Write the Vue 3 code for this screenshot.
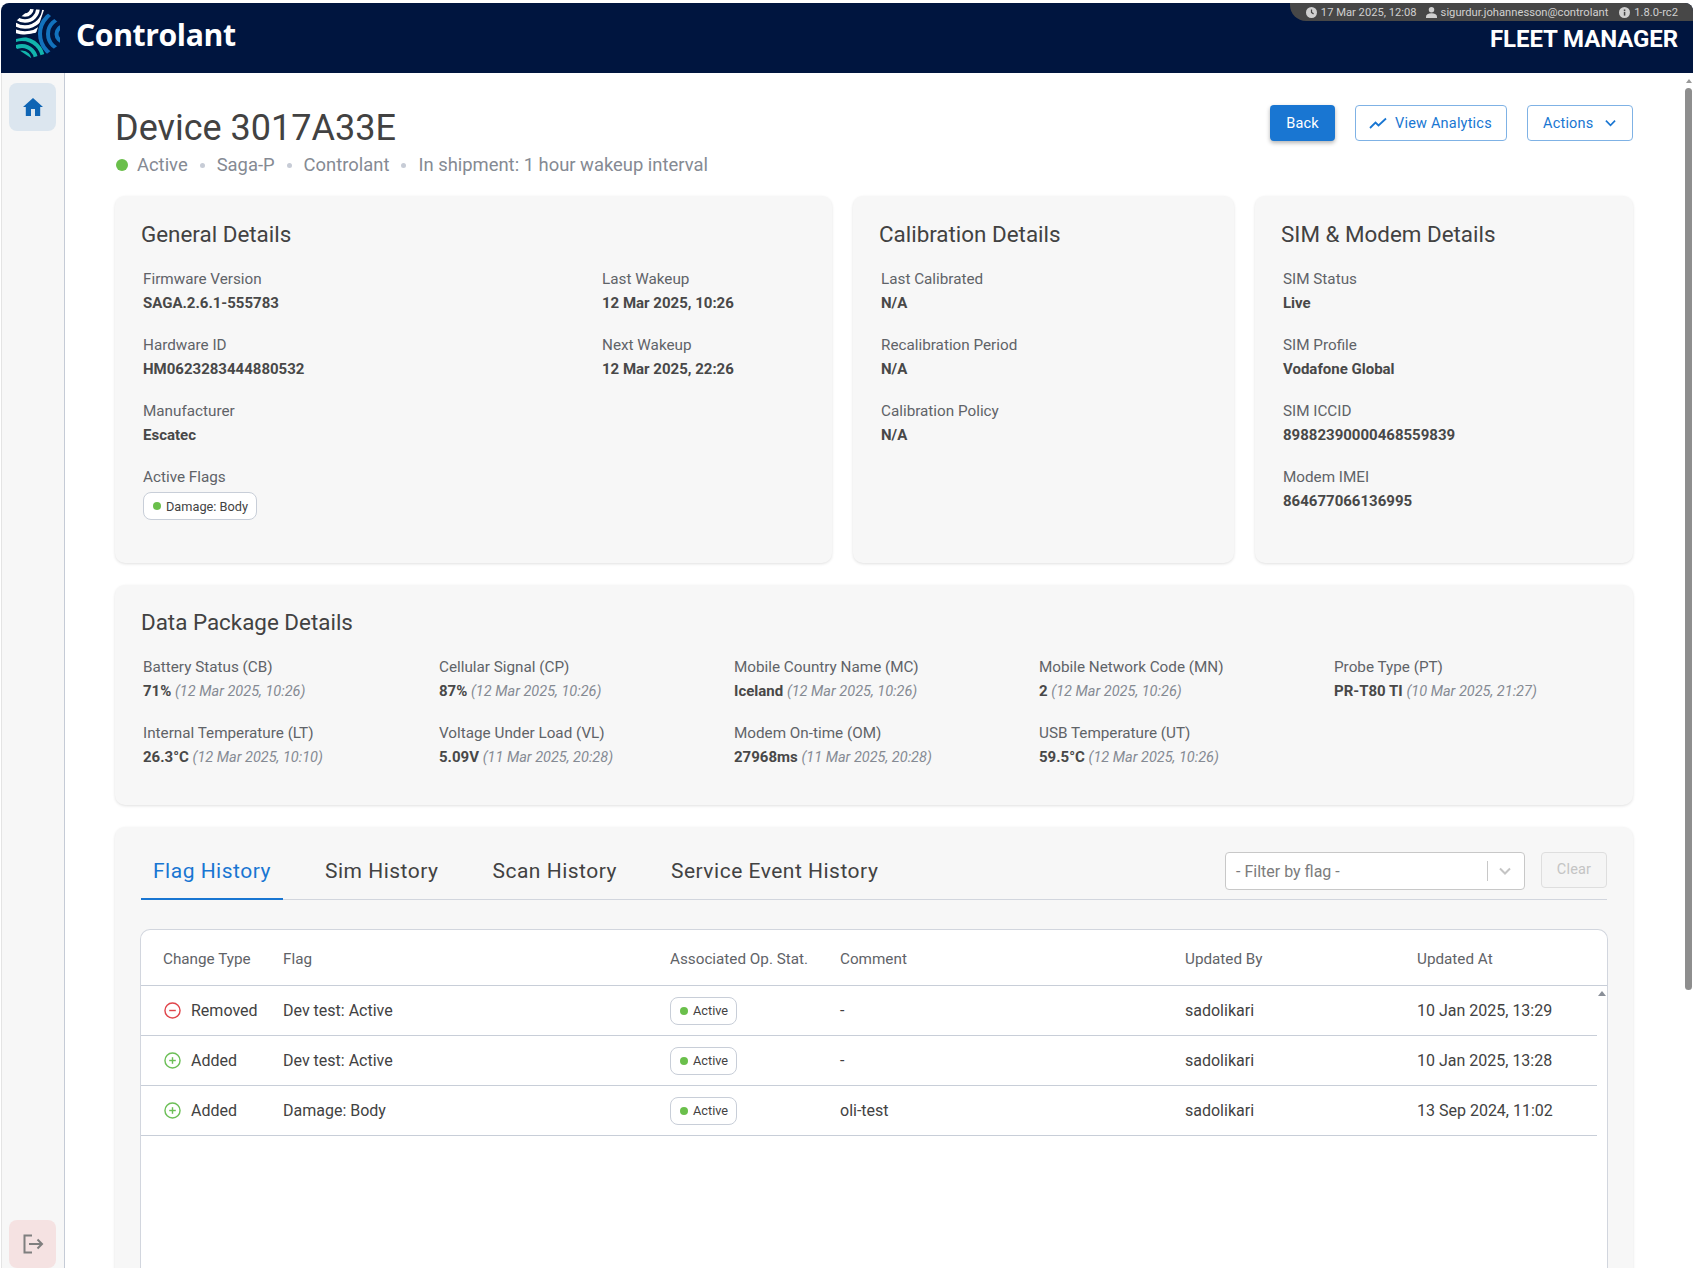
<template>
  <div class="app-frame">
    <header class="top-bar">
      <div class="brand">
        <svg class="brand-logo" viewBox="12 8 52 56" width="52" height="56" fill="none">
          <defs>
            <clipPath id="logo-white"><polygon points="36,35 16,38 16,23 30,11 44,12" /></clipPath>
            <clipPath id="logo-blue"><polygon points="36,35 44,12 60,26 60,46 44,58" /></clipPath>
            <clipPath id="logo-teal"><polygon points="36,37 16,41 16,50 31,60 48,55" /></clipPath>
          </defs>
          <g clip-path="url(#logo-white)" stroke="#fff" stroke-width="3.6">
            <circle cx="25" cy="10" r="25" />
            <circle cx="25" cy="10" r="19" />
            <circle cx="25" cy="10" r="13" />
            <circle cx="25" cy="10" r="7" />
          </g>
          <g clip-path="url(#logo-blue)" stroke="#1272bd" stroke-width="4">
            <circle cx="64" cy="36" r="24" />
            <circle cx="64" cy="36" r="16" />
            <circle cx="64" cy="36" r="7.5" />
          </g>
          <g clip-path="url(#logo-teal)" stroke="#12b5ad" stroke-width="4">
            <circle cx="22" cy="62" r="21" />
            <circle cx="22" cy="62" r="14" />
            <circle cx="22" cy="62" r="7.5" />
          </g>
        </svg>
        <span class="brand-name">Controlant</span>
      </div>
      <div class="top-right">
        <div class="status-strip">
          <span class="status-item status-date">
            <svg viewBox="0 0 16 16" width="11" height="11"><circle cx="8" cy="8" r="8" fill="#d0d0d0" /><path d="M8 3.5V8l3 2" stroke="#444" stroke-width="1.8" fill="none" /></svg>
            17 Mar 2025, 12:08
          </span>
          <span class="status-item">
            <svg viewBox="0 0 16 16" width="11" height="11" fill="#d0d0d0"><circle cx="8" cy="4" r="4" /><path d="M0 16v-2c0-3 3-5 8-5s8 2 8 5v2z" /></svg>
            sigurdur.johannesson@controlant
          </span>
          <span class="status-item">
            <svg viewBox="0 0 16 16" width="11" height="11"><circle cx="8" cy="8" r="8" fill="#d0d0d0" /><rect x="7" y="7" width="2.2" height="5.5" fill="#444" /><rect x="7" y="3.6" width="2.2" height="2.2" fill="#444" /></svg>
            1.8.0-rc2
          </span>
        </div>
        <div class="product-name">FLEET MANAGER</div>
      </div>
    </header>

    <div class="body-row">
      <nav class="side-nav">
        <button class="nav-btn nav-home">
          <svg viewBox="0 0 24 24" width="24" height="24" fill="#0f65b4"><path d="M10 21v-7h4v7h5.2v-9H22L12 3 2 12h2.8v9z" /></svg>
        </button>
        <button class="nav-btn nav-logout">
          <svg viewBox="0 0 24 24" width="24" height="24" fill="none" stroke="#7f7f7f" stroke-width="2"><path d="M11 3.5H3.5v17H11" /><path d="M8 12h13M16.5 7.5 21 12l-4.5 4.5" /></svg>
        </button>
      </nav>

      <main class="content">
        <div class="page-head">
          <div>
            <h1 class="page-title">Device 3017A33E</h1>
            <div class="sub-line">
              <span class="dot"></span>
              <span>Active</span><i class="sep"></i>
              <span>Saga-P</span><i class="sep"></i>
              <span>Controlant</span><i class="sep"></i>
              <span>In shipment: 1 hour wakeup interval</span>
            </div>
          </div>
          <div class="head-actions">
            <button class="btn btn-solid">Back</button>
            <button class="btn btn-outline btn-analytics">
              <svg viewBox="0 0 18 12" width="18" height="12" fill="none" stroke="#1976d2" stroke-width="1.8"><path d="M1 11 6.5 5.5l3 3L17 1.5" /></svg>
              View Analytics
            </button>
            <button class="btn btn-outline btn-actions">
              Actions
              <svg viewBox="0 0 12 8" width="11" height="8" fill="none" stroke="#1976d2" stroke-width="1.8"><path d="M1 1.5 6 6.5l5-5" /></svg>
            </button>
          </div>
        </div>

        <div class="card-row">
          <section class="card card-general">
            <h2 class="card-title">General Details</h2>
            <div class="general-grid">
              <div>
                <div v-for="f in generalLeft" :key="f.label" class="field">
                  <div class="field-label">{{ f.label }}</div>
                  <div class="field-value">{{ f.value }}</div>
                </div>
                <div class="field">
                  <div class="field-label">Active Flags</div>
                  <span class="chip chip-flag"><span class="chip-dot"></span>Damage: Body</span>
                </div>
              </div>
              <div>
                <div v-for="f in generalRight" :key="f.label" class="field">
                  <div class="field-label">{{ f.label }}</div>
                  <div class="field-value">{{ f.value }}</div>
                </div>
              </div>
            </div>
          </section>

          <section class="card card-calibration">
            <h2 class="card-title">Calibration Details</h2>
            <div class="fields">
              <div v-for="f in calibration" :key="f.label" class="field">
                <div class="field-label">{{ f.label }}</div>
                <div class="field-value">{{ f.value }}</div>
              </div>
            </div>
          </section>

          <section class="card card-sim">
            <h2 class="card-title">SIM &amp; Modem Details</h2>
            <div class="fields">
              <div v-for="f in sim" :key="f.label" class="field">
                <div class="field-label">{{ f.label }}</div>
                <div class="field-value">{{ f.value }}</div>
              </div>
            </div>
          </section>
        </div>

        <section class="card card-data">
          <h2 class="card-title">Data Package Details</h2>
          <div class="data-grid">
            <div v-for="d in dataPackage" :key="d.label" class="field">
              <div class="field-label">{{ d.label }}</div>
              <div class="field-value">{{ d.value }} <em class="field-time">({{ d.time }})</em></div>
            </div>
          </div>
        </section>

        <section class="card card-history">
          <div class="tab-bar">
            <div class="tabs">
              <button v-for="(t, i) in tabs" :key="t" class="tab" :class="{ active: i === 0 }">{{ t }}</button>
            </div>
            <div class="tab-tools">
              <div class="filter-select">
                <span class="filter-text">- Filter by flag -</span>
                <span class="filter-divider"></span>
                <svg viewBox="0 0 12 8" width="12" height="8" fill="none" stroke="#c4c4c4" stroke-width="2"><path d="M1 1.5 6 6.5l5-5" /></svg>
              </div>
              <button class="btn-clear">Clear</button>
            </div>
          </div>

          <div class="table-wrap">
            <div class="table-row table-head">
              <div class="col col-type col-type-head">Change Type</div>
              <div class="col col-flag">Flag</div>
              <div class="col col-op">Associated Op. Stat.</div>
              <div class="col col-comment">Comment</div>
              <div class="col col-by">Updated By</div>
              <div class="col col-at">Updated At</div>
            </div>
            <div class="table-body">
              <div v-for="(r, i) in history" :key="i" class="table-row data-row">
                <div class="col col-type">
                  <svg viewBox="0 0 18 18" width="17" height="17" fill="none" :stroke="r.type === 'Added' ? '#6cbf57' : '#e0454b'" stroke-width="1.5">
                    <circle cx="9" cy="9" r="8" />
                    <path d="M5.5 9h7" />
                    <path v-if="r.type === 'Added'" d="M9 5.5v7" />
                  </svg>
                  {{ r.type }}
                </div>
                <div class="col col-flag">{{ r.flag }}</div>
                <div class="col col-op">
                  <span class="chip chip-op"><span class="chip-dot"></span>Active</span>
                </div>
                <div class="col col-comment">{{ r.comment }}</div>
                <div class="col col-by">{{ r.by }}</div>
                <div class="col col-at">{{ r.at }}</div>
              </div>
              <span class="inner-scroll-arrow"></span>
            </div>
          </div>
        </section>
      </main>

      <div class="page-scroll">
        <span class="scroll-arrow"></span>
        <span class="scroll-thumb"></span>
      </div>
    </div>
  </div>
</template>

<script setup>
const generalLeft = [
  { label: 'Firmware Version', value: 'SAGA.2.6.1-555783' },
  { label: 'Hardware ID', value: 'HM0623283444880532' },
  { label: 'Manufacturer', value: 'Escatec' }
]

const generalRight = [
  { label: 'Last Wakeup', value: '12 Mar 2025, 10:26' },
  { label: 'Next Wakeup', value: '12 Mar 2025, 22:26' }
]

const calibration = [
  { label: 'Last Calibrated', value: 'N/A' },
  { label: 'Recalibration Period', value: 'N/A' },
  { label: 'Calibration Policy', value: 'N/A' }
]

const sim = [
  { label: 'SIM Status', value: 'Live' },
  { label: 'SIM Profile', value: 'Vodafone Global' },
  { label: 'SIM ICCID', value: '89882390000468559839' },
  { label: 'Modem IMEI', value: '864677066136995' }
]

const dataPackage = [
  { label: 'Battery Status (CB)', value: '71%', time: '12 Mar 2025, 10:26' },
  { label: 'Cellular Signal (CP)', value: '87%', time: '12 Mar 2025, 10:26' },
  { label: 'Mobile Country Name (MC)', value: 'Iceland', time: '12 Mar 2025, 10:26' },
  { label: 'Mobile Network Code (MN)', value: '2', time: '12 Mar 2025, 10:26' },
  { label: 'Probe Type (PT)', value: 'PR-T80 TI', time: '10 Mar 2025, 21:27' },
  { label: 'Internal Temperature (LT)', value: '26.3°C', time: '12 Mar 2025, 10:10' },
  { label: 'Voltage Under Load (VL)', value: '5.09V', time: '11 Mar 2025, 20:28' },
  { label: 'Modem On-time (OM)', value: '27968ms', time: '11 Mar 2025, 20:28' },
  { label: 'USB Temperature (UT)', value: '59.5°C', time: '12 Mar 2025, 10:26' }
]

const tabs = ['Flag History', 'Sim History', 'Scan History', 'Service Event History']

const history = [
  { type: 'Removed', flag: 'Dev test: Active', comment: '-', by: 'sadolikari', at: '10 Jan 2025, 13:29' },
  { type: 'Added', flag: 'Dev test: Active', comment: '-', by: 'sadolikari', at: '10 Jan 2025, 13:28' },
  { type: 'Added', flag: 'Damage: Body', comment: 'oli-test', by: 'sadolikari', at: '13 Sep 2024, 11:02' }
]
</script>

<style>
html,
body {
  margin: 0;
  background: #fff;
  overflow: hidden;
}
</style>

<style scoped>
.app-frame {
  height: 1268px;
  padding: 3px 5px 0 1px;
  box-sizing: border-box;
  display: flex;
  flex-direction: column;
  overflow: hidden;
  font-family: Roboto, "Liberation Sans", sans-serif;
  color: #424242;
  background: #fff;
}

.top-bar {
  flex: none;
  height: 70px;
  display: flex;
  justify-content: space-between;
  background: #00153f;
  border-radius: 8px 8px 0 0;
}

.brand {
  display: flex;
  align-items: center;
  gap: 12px;
  padding-left: 11px;
}

.brand-logo {
  margin-top: -8px;
}

.brand-name {
  font-family: "Open Sans", Lato, sans-serif;
  font-size: 30.2px;
  font-weight: 700;
  color: #fff;
  letter-spacing: -0.4px;
  margin-top: -8px;
}

.top-right {
  display: flex;
  flex-direction: column;
  align-items: flex-end;
}

.status-strip {
  height: 18px;
  display: flex;
  align-items: center;
  gap: 11px;
  padding: 0 15px 0 16px;
  background: #474747;
  border-radius: 0 8px 0 16px;
  font-size: 11.2px;
  color: #d0d0d0;
}

.status-item {
  display: flex;
  align-items: center;
  gap: 4px;
}

.status-date {
  margin-right: -2px;
}

.product-name {
  font-size: 24px;
  font-weight: 700;
  color: #fff;
  padding: 4px 15px 0 0;
  letter-spacing: -0.1px;
}

.body-row {
  flex: 1;
  display: flex;
  min-height: 0;
}

.side-nav {
  flex: none;
  width: 64px;
  box-sizing: border-box;
  background: #f7f7f7;
  border-right: 1px solid #c5cbd6;
  border-left: 1px solid #e4e4e4;
  padding: 10px 0 0 7px;
  display: flex;
  flex-direction: column;
  justify-content: space-between;
}

.nav-btn {
  width: 47px;
  height: 48px;
  border: 0;
  border-radius: 8px;
  display: flex;
  align-items: center;
  justify-content: center;
  padding: 0;
}

.nav-home {
  background: #dce6ef;
}

.nav-logout {
  background: #f5e2e2;
}

.content {
  flex: 1;
  min-width: 0;
  padding: 32px 60px 0 50px;
  display: flex;
  flex-direction: column;
  gap: 22px;
  overflow: hidden;
}

.page-head {
  flex: none;
  display: flex;
  justify-content: space-between;
  align-items: flex-start;
  height: 69px;
}

.page-title {
  margin: 2px 0 0;
  font-size: 36px;
  font-weight: 400;
  line-height: 42px;
  color: #424242;
}

.sub-line {
  display: flex;
  align-items: center;
  gap: 10px;
  margin-top: 4px;
  font-size: 18.4px;
  line-height: 24px;
  color: #858a93;
}

.dot {
  width: 12px;
  height: 12px;
  margin: 0 -1px 0 1px;
  border-radius: 50%;
  background: #6abf4b;
}

.sep {
  width: 5px;
  height: 5px;
  border-radius: 50%;
  background: #c7ccd6;
  margin: 0 2px;
}

.head-actions {
  display: flex;
  gap: 20px;
}

.btn {
  height: 36px;
  box-sizing: border-box;
  border-radius: 4px;
  font-family: inherit;
  font-size: 14.5px;
  letter-spacing: 0.2px;
  display: flex;
  align-items: center;
  padding-bottom: 1px;
}

.btn-solid {
  width: 65px;
  justify-content: center;
  background: #1976d2;
  border: 0;
  color: #fff;
  box-shadow: 0 2px 4px rgba(0, 0, 0, 0.3);
}

.btn-outline {
  background: #fff;
  border: 1px solid #7fb2e5;
  color: #1976d2;
}

.btn-analytics {
  width: 152px;
  gap: 8px;
  padding-left: 13px;
}

.btn-actions {
  width: 106px;
  justify-content: space-between;
  padding-left: 15px;
  padding-right: 16px;
}

.card-row {
  flex: none;
  display: flex;
  gap: 21px;
}

.card {
  box-sizing: border-box;
  background: #f7f7f7;
  border-radius: 10px;
  box-shadow: 0 1px 3px rgba(0, 0, 0, 0.12);
  padding: 24px 26px 0 26px;
}

.card-general {
  width: 717px;
  height: 367px;
}

.card-calibration {
  width: 381px;
  height: 367px;
}

.card-sim {
  width: 378px;
  height: 367px;
}

.card-data {
  flex: none;
  height: 220px;
  padding-top: 23px;
}

.card-title {
  margin: 0 0 21px;
  font-size: 22.4px;
  font-weight: 400;
  line-height: 28px;
  color: #424242;
}

.general-grid {
  display: grid;
  grid-template-columns: 459px 1fr;
  padding-left: 2px;
}

.fields {
  padding-left: 2px;
}

.field {
  height: 66px;
}

.field-label {
  font-size: 15.25px;
  line-height: 20px;
  color: #5f6368;
  margin-bottom: 4px;
}

.field-value {
  font-size: 15px;
  line-height: 20px;
  font-weight: 700;
  color: #484848;
}

.field-time {
  font-weight: 400;
  font-size: 14.5px;
  color: #858a93;
}

.chip {
  display: inline-flex;
  align-items: center;
  box-sizing: border-box;
  background: #fff;
  border: 1px solid #c8ced8;
  border-radius: 8px;
  font-size: 12.75px;
  color: #424242;
  height: 28px;
  padding: 0 8px 0 9px;
  gap: 5px;
}

.chip-flag {
  margin-top: 1px;
}

.chip-dot {
  width: 8px;
  height: 8px;
  border-radius: 50%;
  background: #6abf4b;
}

.data-grid {
  display: grid;
  grid-template-columns: 296px 295px 305px 295px 1fr;
  padding-left: 2px;
}

.card-history {
  flex: none;
  height: 500px;
  padding-top: 25px;
  border-radius: 10px 10px 0 0;
}

.tab-bar {
  display: flex;
  justify-content: space-between;
  height: 48px;
  box-sizing: border-box;
  border-bottom: 1px solid #d2d6de;
}

.tabs {
  display: flex;
  gap: 30px;
}

.tab {
  height: 48px;
  box-sizing: border-box;
  background: none;
  border: 0;
  border-bottom: 2px solid transparent;
  padding: 0 12px 8px;
  font-family: inherit;
  font-size: 21px;
  letter-spacing: 0.5px;
  color: #424242;
}

.tab.active {
  color: #1976d2;
  border-bottom-color: #1976d2;
}

.tab-tools {
  display: flex;
  gap: 16px;
  align-items: flex-start;
}

.filter-select {
  width: 300px;
  height: 38px;
  box-sizing: border-box;
  display: flex;
  align-items: center;
  background: #fff;
  border: 1px solid #c8c8c8;
  border-radius: 4px;
  padding: 0 13px 0 10px;
  font-size: 16px;
  color: #7c7c7c;
}

.filter-text {
  flex: 1;
}

.filter-divider {
  width: 1px;
  height: 20px;
  background: #c8c8c8;
  margin-right: 11px;
}

.btn-clear {
  width: 66px;
  height: 36px;
  background: #f5f5f5;
  border: 1px solid #dedede;
  border-radius: 4px;
  padding: 0 0 2px;
  font-family: inherit;
  font-size: 14.5px;
  letter-spacing: 0.2px;
  color: #c4c4c4;
}

.table-wrap {
  margin: 29px -1px 0;
  height: 400px;
  box-sizing: border-box;
  background: #fff;
  border: 1px solid #d2d6de;
  border-radius: 10px 10px 0 0;
  border-bottom: 0;
}

.table-row {
  display: flex;
  align-items: center;
}

.table-head {
  height: 56px;
  box-sizing: border-box;
  padding-top: 2px;
  border-bottom: 1px solid #c8ced8;
  font-size: 15.25px;
  color: #5f6368;
}

.table-body {
  position: relative;
  padding-right: 10px;
}

.data-row {
  height: 50px;
  border-bottom: 1px solid #c8ced8;
  font-size: 16px;
  color: #424242;
  box-sizing: border-box;
}

.col {
  box-sizing: border-box;
}

.col-type {
  width: 142px;
  padding-left: 23px;
  display: flex;
  align-items: center;
  gap: 10px;
}

.col-type-head {
  padding-left: 22px;
}

.col-flag {
  width: 387px;
}

.col-op {
  width: 170px;
}

.col-comment {
  width: 345px;
}

.col-by {
  width: 232px;
}

.col-at {
  flex: 1;
}

.inner-scroll-arrow {
  position: absolute;
  top: 5px;
  right: 1px;
  border-left: 4px solid transparent;
  border-right: 4px solid transparent;
  border-bottom: 5px solid #8a8f98;
}

.page-scroll {
  flex: none;
  width: 8px;
  margin-left: -8px;
  position: relative;
}

.scroll-arrow {
  position: absolute;
  top: 6px;
  left: 1px;
  border-left: 3px solid transparent;
  border-right: 3px solid transparent;
  border-bottom: 4px solid #999;
}

.scroll-thumb {
  position: absolute;
  top: 15px;
  left: 0;
  width: 7px;
  height: 902px;
  border-radius: 4px;
  background: #8e8e8e;
}
</style>
